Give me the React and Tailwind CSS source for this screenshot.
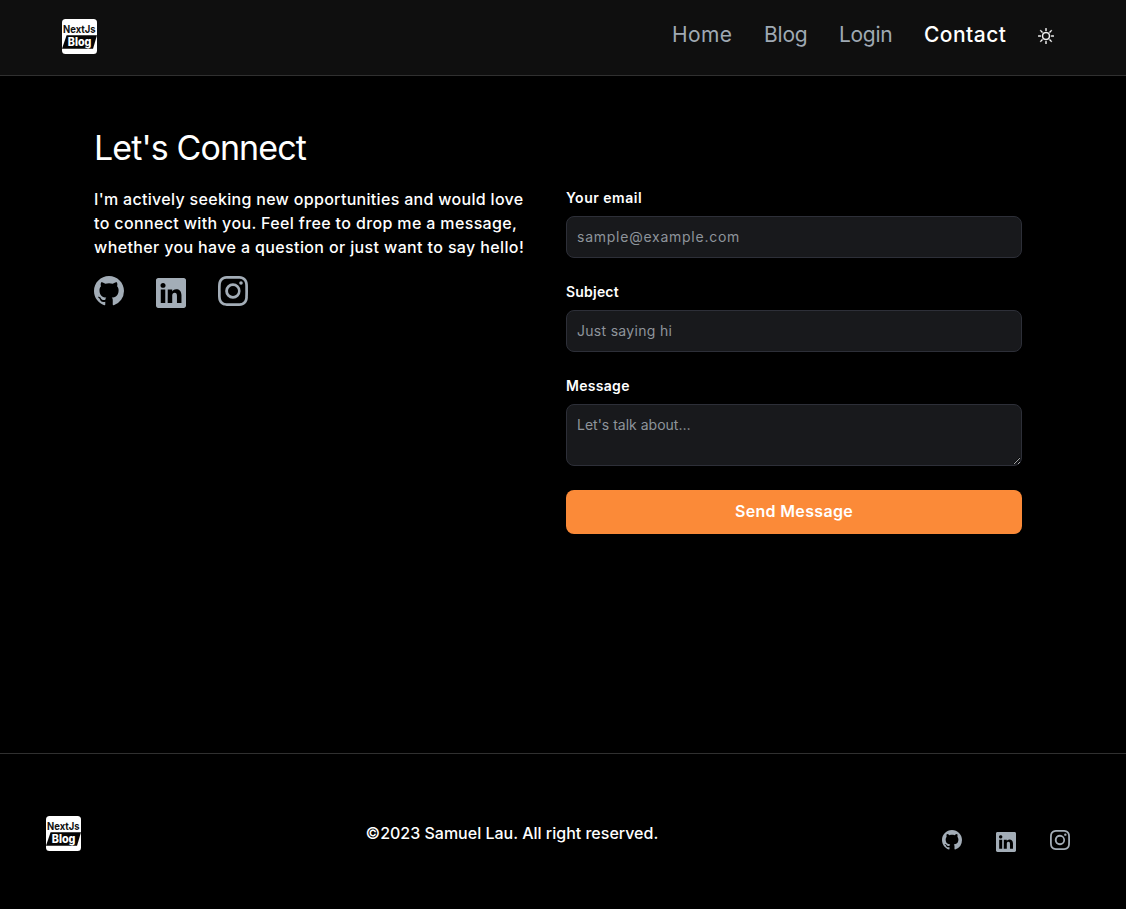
import { BsGithub, BsLinkedin, BsInstagram, BsSun } from "react-icons/bs";

function Logo() {
  return (
    <svg viewBox="0 0 35 35" className="block size-[35px] shrink-0" role="img" aria-label="NextJs Blog">
      <rect width="35" height="35" rx="3.5" fill="#fff" />
      <path d="M4.6 16.2H35L31 29.8H0Z" fill="#050505" />
      <g fontFamily="Inter, sans-serif" fontWeight="700">
        <text x="1" y="14.4" fontSize="10.5" textLength="32.6" lengthAdjust="spacingAndGlyphs" fill="#111">NextJs</text>
        <text x="5.8" y="27" fontSize="11.5" fontWeight="800" textLength="23.6" lengthAdjust="spacingAndGlyphs" fill="#fff">Blog</text>
      </g>
    </svg>
  );
}

function Field({ label, id, labelClass, children }) {
  return (
    <div className="mb-6">
      <label htmlFor={id} className={`mb-2 block text-sm font-semibold leading-5 ${labelClass}`}>{label}</label>
      {children}
    </div>
  );
}

const field =
  "block w-full rounded-lg border border-[#2d2f38] bg-[#18191c] px-2.5 text-sm text-white outline-none placeholder:text-[#8e949b] placeholder:opacity-100";

export default function App() {
  return (
    <div className="flex min-h-[909px] flex-col bg-black font-['Inter',sans-serif] text-white">
      <header className="flex h-[76px] items-start justify-between border-b border-[#303030] bg-[#0f0f0f] pl-[62px] pr-18 pt-[19px]">
        <Logo />
        <nav className="flex items-start gap-8 whitespace-nowrap text-xl leading-8 text-[#9fa9b3]">
          <a className="w-[60px] text-[21px] tracking-[0.4px]">Home</a>
          <a className="w-[43px] text-[21px] tracking-[-0.2px]">Blog</a>
          <a className="w-[53px] text-[21px] tracking-[-0.3px]">Login</a>
          <a className="w-[82px] text-[21px] font-medium tracking-[0.45px] text-white">Contact</a>
          <BsSun className="mt-[9px] size-4 text-white" stroke="currentColor" strokeWidth="0.4" />
        </nav>
      </header>

      <main className="flex flex-1 flex-col px-[94px] pt-[52px]">
        <h1 className="text-[34px] leading-10 tracking-[-0.9px]">Let's Connect</h1>
        <div className="mt-5 flex gap-[42px]">
          <section className="w-[430px]">
            <p className="-mt-px whitespace-nowrap text-base font-medium leading-6">
              <span className="block tracking-[0.31px]">I'm actively seeking new opportunities and would love</span>
              <span className="block tracking-[0.36px]">to connect with you. Feel free to drop me a message,</span>
              <span className="block tracking-[0.37px]">whether you have a question or just want to say hello!</span>
            </p>
            <div className="mt-[17px] flex gap-8 text-[#a3adb7]">
              <BsGithub className="size-[30px]" />
              <BsLinkedin className="mt-0.5 size-[30px]" />
              <BsInstagram className="size-[30px]" />
            </div>
          </section>

          <form className="w-[456px]">
            <Field label="Your email" id="email" labelClass="tracking-[0.5px]">
              <input id="email" type="email" placeholder="sample@example.com" className={`${field} h-[42px] pb-0.5 tracking-[0.75px]`} />
            </Field>
            <Field label="Subject" id="subject" labelClass="tracking-[0.2px]">
              <input id="subject" type="text" placeholder="Just saying hi" className={`${field} h-[42px] pb-0.5 tracking-[0.3px]`} />
            </Field>
            <Field label="Message" id="message" labelClass="tracking-[0.3px]">
              <textarea id="message" placeholder="Let's talk about…" className={`${field} h-[62px] py-2.5 leading-5`} />
            </Field>
            <button type="button" className="h-11 w-full rounded-lg bg-[#fb8a38] pb-0.5 text-base font-semibold tracking-[0.33px]">
              Send Message
            </button>
          </form>
        </div>
      </main>

      <footer className="flex h-[156px] items-start justify-between border-t border-[#303030] pl-[46px] pr-14 pt-[62px]">
        <Logo />
        <p className="mt-[5px] w-[292px] whitespace-nowrap text-base font-medium leading-6">©2023 Samuel Lau. All right reserved.</p>
        <div className="mt-3.5 flex gap-[34px] text-[#a3adb7]">
          <BsGithub className="size-5" />
          <BsLinkedin className="mt-[1.5px] size-5" />
          <BsInstagram className="size-5" />
        </div>
      </footer>
    </div>
  );
}
